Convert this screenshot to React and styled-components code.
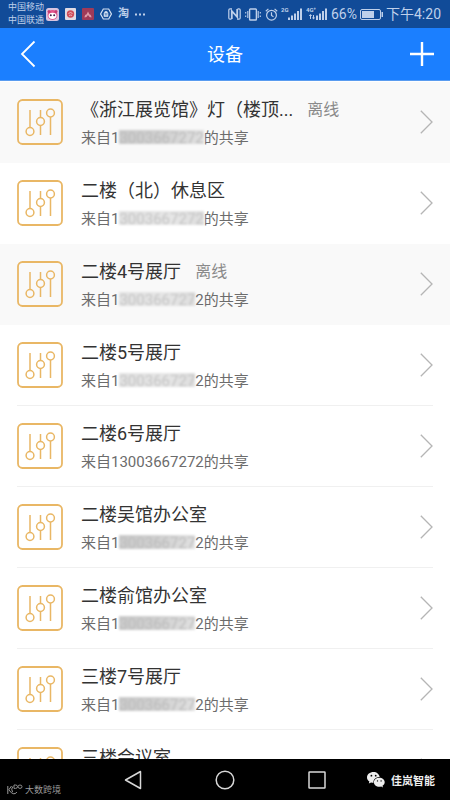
import React from "react";
import styled, { createGlobalStyle } from "styled-components";

const GlobalStyle = createGlobalStyle`
  * { box-sizing: border-box; }
  body {
    margin: 0;
    font-family: Roboto, "Noto Sans CJK SC", sans-serif;
    background: #fff;
  }
  button { border: 0; padding: 0; background: none; font: inherit; color: inherit; cursor: pointer; }
  svg { display: block; flex: none; }
`;

const Screen = styled.div`
  display: flex;
  flex-direction: column;
  height: 100vh;
  overflow: hidden;
`;

const StatusBar = styled.div`
  flex: none;
  display: flex;
  align-items: center;
  justify-content: space-between;
  height: 28px;
  padding: 0 9px 0 8px;
  background: #114b98;
  color: #bfd0ea;
`;

const StatusGroup = styled.div`
  display: flex;
  align-items: center;
  gap: ${(p) => p.$gap}px;
`;

const Carriers = styled.div`
  font-size: 9px;
  line-height: 13px;
  margin-right: -4px;
`;

const AppGlyph = styled.span`
  font-size: 11px;
  line-height: 16px;
  font-weight: 700;
`;

const StatusText = styled.span`
  font-size: 14px;
  line-height: 20px;
  white-space: nowrap;
`;

const Header = styled.header`
  flex: none;
  display: grid;
  grid-template-columns: 40px 1fr 40px;
  align-items: center;
  height: 53px;
  padding: 0 8px;
  background: #1b7fff;
  border-bottom: 1px solid #5a9cf0;
  color: #fff;
`;

const Heading = styled.h1`
  margin: 0;
  padding-top: 2px;
  text-align: center;
  font-size: 18px;
  line-height: 28px;
  font-weight: 400;
`;

const IconButton = styled.button`
  display: grid;
  place-items: center;
  height: 40px;
`;

const List = styled.ul`
  flex: 1;
  min-height: 0;
  overflow: hidden;
  list-style: none;
  margin: 0;
  padding: 1px 0 0;
  background: #fff;
`;

const Item = styled.li`
  padding: 0 17px;
  background: ${(p) => (p.$offline ? "#f9f9f9" : "#fff")};
`;

const RowLink = styled.a`
  display: flex;
  align-items: center;
  height: 81px;
  border-bottom: 1px solid ${(p) => (p.$plain ? "transparent" : "#f0f0f0")};
  color: inherit;
  text-decoration: none;
`;

const RowBody = styled.div`
  flex: 1;
  min-width: 0;
  padding: 4px 0 0 18px;
`;

const TitleLine = styled.div`
  display: flex;
  align-items: center;
  gap: 14px;
  line-height: 28px;
  white-space: nowrap;
`;

const Title = styled.span`
  font-size: 18px;
  color: #333;
`;

const State = styled.span`
  font-size: 16px;
  color: #8a8a8a;
`;

const Source = styled.div`
  font-size: 15px;
  line-height: 28px;
  color: #6c6c6c;
  white-space: nowrap;
`;

const Masked = styled.span`
  display: inline-block;
  height: 14px;
  line-height: 16px;
  vertical-align: middle;
  margin-top: -5px;
  color: ${(p) => (p.$light ? "#c4c4c4" : "#bcbcbc")};
  background: ${(p) =>
    p.$light
      ? "linear-gradient(90deg, #e2e2e2, #e6e6e6 60%, #dedede)"
      : "linear-gradient(90deg, #cbcbcb, #d0d0d0 50%, #e0e0e0)"};
  filter: blur(1px);
`;

const NavBar = styled.nav`
  flex: none;
  display: grid;
  grid-template-columns: 1fr 92px 92px 92px 1fr;
  height: 41px;
  background: #000;
  color: #d8d8d8;
`;

const NavButton = styled.button`
  display: grid;
  place-items: center;
`;

const SourceMark = styled.div`
  display: flex;
  align-items: center;
  align-self: end;
  gap: 2px;
  height: 22px;
  padding-left: 7px;
  font-size: 9px;
  color: #9a9a9a;
  white-space: nowrap;
`;

const AuthorMark = styled.div`
  display: flex;
  align-items: center;
  justify-content: flex-end;
  gap: 6px;
  padding-right: 15px;
  font-size: 11px;
  font-weight: 700;
  color: #eee;
  white-space: nowrap;
`;

const PandaIcon = () => (
  <svg width="13" height="13" viewBox="0 0 13 13">
    <rect width="13" height="13" rx="2.5" fill="#d8c4e0" />
    <circle cx="6.5" cy="7" r="5" fill="#e2568c" />
    <ellipse cx="6.5" cy="7.8" rx="4" ry="3.1" fill="#fff" />
    <circle cx="3" cy="3.4" r="1.5" fill="#c73c72" />
    <circle cx="10" cy="3.4" r="1.5" fill="#c73c72" />
    <circle cx="4.8" cy="7.3" r="1" fill="#47204c" />
    <circle cx="8.2" cy="7.3" r="1" fill="#47204c" />
  </svg>
);

const DiscIcon = () => (
  <svg width="11" height="12" viewBox="0 0 11 12">
    <rect width="11" height="12" rx="1" fill="#e1dbe4" />
    <circle cx="5.5" cy="6" r="3.7" fill="#cf4d5a" />
    <path d="M3.5 5.5q2-2 4 0M4 7.5q2-1 3 0" stroke="#f0cfd3" strokeWidth=".8" fill="none" />
  </svg>
);

const RedIcon = () => (
  <svg width="12" height="12" viewBox="0 0 12 12">
    <rect width="12" height="12" rx="1" fill="#a03a58" />
    <path d="M2.500 9.500c0-2.500 1.500-3 2-3L6 3.500l1.500 3c.5 0 2 .5 2 3L7.500 9 6 7 4.500 9z" fill="#e09aa8" />
  </svg>
);

const HexIcon = () => (
  <svg width="12" height="12" viewBox="0 0 12 12" fill="none" stroke="#d3e0f2">
    <path d="M3.300 1h5.400L11.400 6 8.700 11H3.300L.6 6z" strokeWidth="1.2" />
    <path d="M4 8.500V5.500l1-2h2l1 2v3z" fill="#d3e0f2" strokeWidth=".6" />
    <path d="M5.300 5v2.500M6.800 5v2.500" stroke="#114b98" strokeWidth=".6" />
  </svg>
);

const DotsIcon = () => (
  <svg width="10" height="3" viewBox="0 0 10 3" fill="currentColor">
    <rect y=".5" width="2" height="2" />
    <rect x="4" y=".5" width="2" height="2" />
    <rect x="8" y=".5" width="2" height="2" />
  </svg>
);

const NfcIcon = () => (
  <svg width="13" height="12" viewBox="0 0 13 12" fill="none" stroke="currentColor">
    <path d="M4 .8H2Q.8.8.8 2v8q0 1.200 1.200 1.200h1.500M9 11.200h2q1.200 0 1.200-1.200V2Q12.200.8 11 .8H9.500" strokeWidth="1.200" />
    <path d="M3.800 11V3l5.400 6V1" strokeWidth="1.800" />
  </svg>
);

const VibrateIcon = () => (
  <svg width="16" height="13" viewBox="0 0 16 13" fill="none" stroke="currentColor">
    <rect x="4.600" y="1" width="6.800" height="11" rx=".8" strokeWidth="1.400" />
    <path d="M2.800 3v7M13.200 3v7M.7 4v1.500M.7 7.500V9M15.300 4v1.500M15.300 7.500V9" strokeWidth="1.100" />
  </svg>
);

const AlarmIcon = () => (
  <svg width="13" height="13" viewBox="0 0 13 13" fill="none" stroke="currentColor" strokeWidth="1.200">
    <circle cx="6.500" cy="7.200" r="4.900" />
    <path d="M6.500 4.300v3.200l2 1.200M.8 3.200L3.400.9M12.200 3.200L9.600.9" />
  </svg>
);

const SignalLabel = styled.text`
  font-size: 6px;
  font-weight: 700;
`;

const SignalIcon = ({ label, data }) => (
  <svg width="22" height="14" viewBox="0 0 22 14" fill="currentColor">
    <SignalLabel x="0" y="5">{label}</SignalLabel>
    {data && <path d="M4.500 7L6.200 9H5v3H4V9H2.800zM7.500 12.500L5.900 10.600H7V8h1v2.600h1.200z" />}
    {!data && <rect x="7" y="10.500" width="2" height="2.500" />}
    <rect x="10" y="8.500" width="2" height="4.500" />
    <rect x="13" y="6.500" width="2" height="6.500" />
    <rect x="16" y="4" width="2" height="9" />
    <rect x="19" y="1.500" width="2" height="11.500" />
  </svg>
);

const BatteryIcon = () => (
  <svg width="23" height="11" viewBox="0 0 23 11">
    <rect x=".5" y=".5" width="20" height="10" rx="1.500" fill="none" stroke="currentColor" />
    <rect x="2" y="2" width="12" height="7" fill="currentColor" />
    <rect x="21.500" y="3" width="1.500" height="5" fill="currentColor" />
  </svg>
);

const BackIcon = () => (
  <svg width="16" height="28" viewBox="0 0 16 28" fill="none" stroke="currentColor" strokeWidth="1.800">
    <path d="M14.500 1.500L2 14l12.500 12.500" />
  </svg>
);

const PlusIcon = () => (
  <svg width="24" height="26" viewBox="0 0 24 26" stroke="currentColor" strokeWidth="2.400">
    <path d="M0 13h24M12 1v24" />
  </svg>
);

const SlidersIcon = () => (
  <svg width="46" height="46" viewBox="0 0 46 46" fill="none" stroke="#e9b765">
    <rect x="1" y="1" width="44" height="44" rx="4.500" strokeWidth="1.800" />
    <g strokeWidth="1.500">
      <path d="M13 11v17.500M23.500 11v7.500M23.500 26.500V36M33.500 18v18" />
      <circle cx="13" cy="32.500" r="3.900" />
      <circle cx="23.500" cy="22.500" r="3.900" />
      <circle cx="33.500" cy="14" r="3.900" />
    </g>
  </svg>
);

const ChevronIcon = () => (
  <svg width="13" height="24" viewBox="0 0 13 24" fill="none" stroke="#b5b5b5" strokeWidth="1.300">
    <path d="M.8 .8L12 12 .8 23.200" />
  </svg>
);

const LoopIcon = () => (
  <svg width="16" height="11" viewBox="0 0 16 11" fill="none" stroke="currentColor">
    <path d="M.8 2v8M4.500 2L1.800 5.800q2.700 4 5 4t3-1.800M5.800 2.500Q3.800 5 5.500 8" />
    <path d="M7 1h1.500q2 0 2 1.700t-2 1.700H7zM13 1q2 0 2 1.700t-2 1.700-2-1.700T13 1z" strokeWidth=".9" />
  </svg>
);

const ChatIcon = () => (
  <svg width="18" height="16" viewBox="0 0 18 16" fill="#eee">
    <path d="M6.500 0C2.900 0 0 2.400 0 5.400c0 1.700.9 3.200 2.400 4.200L1.800 11.600l2.300-1.200c.8.2 1.600.4 2.400.4C6.100 7.500 8.700 5 12.700 5 12.200 2.100 9.700 0 6.500 0z" />
    <path d="M12.300 5.700c-3.100 0-5.400 2-5.400 4.500s2.300 4.500 5.400 4.500c.6 0 1.300-.1 1.900-.3L16 15.500l-.5-1.700c1.400-.9 2.200-2.100 2.200-3.600 0-2.500-2.400-4.500-5.400-4.500z" />
    <g fill="#000">
      <circle cx="4.400" cy="3.700" r=".9" />
      <circle cx="8.700" cy="3.700" r=".9" />
      <circle cx="10.500" cy="8.900" r=".7" />
      <circle cx="14.100" cy="8.900" r=".7" />
    </g>
  </svg>
);

const devices = [
  { name: "《浙江展览馆》灯（楼顶...", offline: true, masked: "3003667272" },
  { name: "二楼（北）休息区", masked: "3003667272", light: true },
  { name: "二楼4号展厅", offline: true, masked: "300366727", tail: "2", light: true },
  { name: "二楼5号展厅", masked: "300366727", tail: "2", light: true },
  { name: "二楼6号展厅", tail: "3003667272" },
  { name: "二楼吴馆办公室", masked: "300366727", tail: "2" },
  { name: "二楼俞馆办公室", masked: "300366727", tail: "2" },
  { name: "三楼7号展厅", masked: "300366727", tail: "2" },
  { name: "三楼会议室", tail: "3003667272" },
];

const DeviceRow = ({ device, plain }) => (
  <Item $offline={device.offline}>
    <RowLink href="#" $plain={plain}>
      <SlidersIcon />
      <RowBody>
        <TitleLine>
          <Title>{device.name}</Title>
          {device.offline && <State>离线</State>}
        </TitleLine>
        <Source>
          来自1
          {device.masked && <Masked $light={device.light}>{device.masked}</Masked>}
          {device.tail}的共享
        </Source>
      </RowBody>
      <ChevronIcon />
    </RowLink>
  </Item>
);

export default function App() {
  return (
    <Screen>
      <GlobalStyle />
      <StatusBar>
        <StatusGroup $gap={6}>
          <Carriers>
            <div>中国移动</div>
            <div>中国联通</div>
          </Carriers>
          <PandaIcon />
          <DiscIcon />
          <RedIcon />
          <HexIcon />
          <AppGlyph>淘</AppGlyph>
          <DotsIcon />
        </StatusGroup>
        <StatusGroup $gap={3}>
          <StatusGroup $gap={4}>
            <NfcIcon />
            <VibrateIcon />
            <AlarmIcon />
          </StatusGroup>
          <SignalIcon label="2G" />
          <SignalIcon label="4G⁺" data />
          <StatusText>66%</StatusText>
          <BatteryIcon />
          <StatusText>下午4:20</StatusText>
        </StatusGroup>
      </StatusBar>
      <Header>
        <IconButton aria-label="返回"><BackIcon /></IconButton>
        <Heading>设备</Heading>
        <IconButton aria-label="添加"><PlusIcon /></IconButton>
      </Header>
      <List>
        {devices.map((device, i) => (
          <DeviceRow
            key={device.name}
            device={device}
            plain={device.offline || devices[i + 1]?.offline}
          />
        ))}
      </List>
      <NavBar>
        <SourceMark><LoopIcon />大数跨境</SourceMark>
        <NavButton aria-label="返回上一页">
          <svg width="18" height="20" viewBox="0 0 18 20" fill="none" stroke="currentColor" strokeWidth="1.500" strokeLinejoin="round">
            <path d="M16.500 1.500v17L1.500 10z" />
          </svg>
        </NavButton>
        <NavButton aria-label="主屏幕">
          <svg width="20" height="20" viewBox="0 0 20 20" fill="none" stroke="currentColor" strokeWidth="1.500">
            <circle cx="10" cy="10" r="8.800" />
          </svg>
        </NavButton>
        <NavButton aria-label="最近任务">
          <svg width="18" height="18" viewBox="0 0 18 18" fill="none" stroke="currentColor" strokeWidth="1.500">
            <rect x="1" y="1" width="16" height="16" rx=".5" />
          </svg>
        </NavButton>
        <AuthorMark><ChatIcon />佳岚智能</AuthorMark>
      </NavBar>
    </Screen>
  );
}
